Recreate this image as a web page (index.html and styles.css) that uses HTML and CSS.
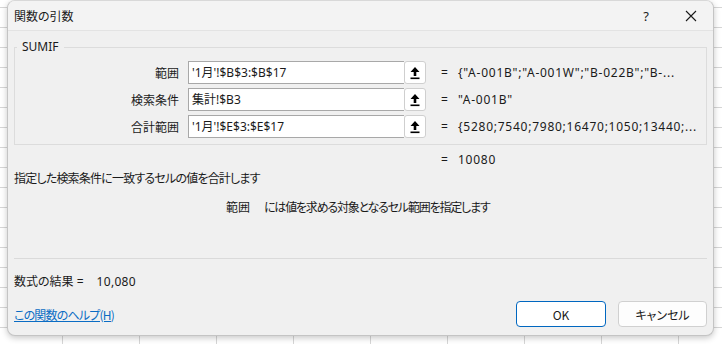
FILE: index.html
```html
<html>

<head>
    <title>関数の引数</title>
    <meta charset="utf-8">
    <link rel="stylesheet" href="styles.css">
</head>

<body>
    <div class="dialog">
        <div class="titleBar">
            <span class="titleText">関数の引数</span>
            <span class="titleHelp">?</span>
            <span class="titleClose">
                <svg width="12" height="12" viewBox="0 0 12 12">
                    <path d="M1 1 L11 11 M11 1 L1 11" stroke="#1a1a1a" stroke-width="1.1" fill="none" />
                </svg>
            </span>
        </div>

        <div class="content">
            <fieldset class="argGroup">
                <legend class="argLegend">SUMIF</legend>

                <div class="argRow">
                    <span class="argLabel">範囲</span>
                    <span class="argField">
                        <span class="argInput">'1月'!$B$3:$B$17</span>
                        <span class="refButton">
                            <svg width="12" height="14" viewBox="0 0 12 14">
                                <path d="M6 1 L10.5 6 L7.3 6 L7.3 10 L4.7 10 L4.7 6 L1.5 6 Z" fill="#000" />
                                <rect x="1.5" y="11.5" width="9" height="1.6" fill="#000" />
                            </svg>
                        </span>
                    </span>
                    <span class="argEq">=</span>
                    <span class="argValue">{"A-001B";"A-001W";"B-022B";"B-...</span>
                </div>

                <div class="argRow">
                    <span class="argLabel">検索条件</span>
                    <span class="argField">
                        <span class="argInput">集計!$B3</span>
                        <span class="refButton">
                            <svg width="12" height="14" viewBox="0 0 12 14">
                                <path d="M6 1 L10.5 6 L7.3 6 L7.3 10 L4.7 10 L4.7 6 L1.5 6 Z" fill="#000" />
                                <rect x="1.5" y="11.5" width="9" height="1.6" fill="#000" />
                            </svg>
                        </span>
                    </span>
                    <span class="argEq">=</span>
                    <span class="argValue">"A-001B"</span>
                </div>

                <div class="argRow">
                    <span class="argLabel">合計範囲</span>
                    <span class="argField">
                        <span class="argInput">'1月'!$E$3:$E$17</span>
                        <span class="refButton">
                            <svg width="12" height="14" viewBox="0 0 12 14">
                                <path d="M6 1 L10.5 6 L7.3 6 L7.3 10 L4.7 10 L4.7 6 L1.5 6 Z" fill="#000" />
                                <rect x="1.5" y="11.5" width="9" height="1.6" fill="#000" />
                            </svg>
                        </span>
                    </span>
                    <span class="argEq">=</span>
                    <span class="argValue">{5280;7540;7980;16470;1050;13440;...</span>
                </div>
            </fieldset>

            <div class="resultRow">
                <span class="argEq">=</span>
                <span class="argValue">10080</span>
            </div>

            <div class="description">指定した検索条件に一致するセルの値を合計します</div>
            <div class="argHelp"><span class="argHelpName">範囲</span>には値を求める対象となるセル範囲を指定します</div>

            <div class="separator"></div>

            <div class="formulaResult">数式の結果 =<span class="formulaValue">10,080</span></div>

            <div class="footer">
                <a class="helpLink" href="#">この関数のヘルプ(H)</a>
                <span class="buttons">
                    <span class="button buttonDefault">OK</span>
                    <span class="button">キャンセル</span>
                </span>
            </div>
        </div>
    </div>
</body>

</html>
```

FILE: styles.css
```css
body {
    margin: 0px;
    width: 722px;
    height: 344px;
    overflow: hidden;
    font-family: "Noto Sans", "Noto Sans CJK JP", sans-serif;
    font-size: 12px;
    font-feature-settings: "palt";
    color: #1a1a1a;
    background-color: #ffffff;
    background-image:
        linear-gradient(to right, #d6d6d6 1px, transparent 1px),
        linear-gradient(to bottom, #d6d6d6 1px, transparent 1px);
    background-size: 77px 20px;
    background-position: 62px 7px;
}

.dialog {
    margin-left: 7px;
    width: 707px;
    height: 336px;
    box-sizing: border-box;
    border: 1px solid #c4c4c4;
    border-top-color: #d8d8d8;
    border-radius: 8px;
    background-color: #f0f0f0;
    box-shadow: 0px 2px 6px rgba(0, 0, 0, 0.22);
    overflow: hidden;
}

.titleBar {
    height: 30px;
    box-sizing: border-box;
    display: flex;
    align-items: center;
    padding-left: 6px;
    background-color: #f3f3f3;
    border-bottom: 1px solid #e3e3e3;
}

.titleText {
    flex: 1;
    font-family: "Noto Sans CJK JP", sans-serif;
    line-height: 16px;
    padding-top: 1px;
}

.titleHelp {
    width: 20px;
    text-align: center;
    font-size: 13px;
    margin-right: 29px;
}

.titleClose {
    display: flex;
    width: 12px;
    margin-right: 16px;
    padding-top: 1px;
}

.content {
    padding: 0px 6px;
}

.argGroup {
    margin: 9px 0px 0px 0px;
    padding: 7px 0px 6px 0px;
    border: 1px solid #dcdcdc;
    display: flex;
    flex-direction: column;
    gap: 4px;
}

.argLegend {
    margin-left: 2px;
    padding: 0px 5px 0px 5px;
    line-height: 14px;
    font-size: 12px;
}

.argRow {
    display: flex;
    align-items: center;
    height: 23px;
}

.argLabel {
    width: 164px;
    margin-right: 9px;
    text-align: right;
    font-family: "Noto Sans CJK JP", sans-serif;
}

.argField {
    display: flex;
    width: 238px;
    height: 23px;
}

.argInput {
    flex: 1;
    box-sizing: border-box;
    height: 23px;
    line-height: 21px;
    padding-left: 3px;
    background-color: #ffffff;
    border: 1px solid #a8a8a8;
    border-right: none;
}

.refButton {
    width: 22px;
    height: 23px;
    box-sizing: border-box;
    display: flex;
    align-items: center;
    justify-content: center;
    background-color: #ffffff;
    border: 1px solid #cfcfcf;
    border-radius: 3px;
}

.argEq {
    margin-left: 15px;
    width: 17px;
}

.argValue {
    white-space: nowrap;
    letter-spacing: 0.75px;
}

.resultRow {
    display: flex;
    height: 16px;
    line-height: 16px;
    margin-top: 7px;
    padding-left: 412px;
}

.description {
    line-height: 16px;
    margin-top: 2px;
    font-family: "Noto Sans CJK JP", sans-serif;
    letter-spacing: -0.8px;
}

.argHelp {
    line-height: 16px;
    margin-top: 13px;
    padding-left: 212px;
    font-family: "Noto Sans CJK JP", sans-serif;
    letter-spacing: -1.2px;
}

.argHelpName {
    margin-right: 14px;
    letter-spacing: 0px;
}

.separator {
    margin-top: 43px;
    height: 1px;
    background-color: #dadada;
}

.formulaResult {
    margin-top: 15px;
    line-height: 16px;
    font-family: "Noto Sans", "Noto Sans CJK JP", sans-serif;
}

.formulaValue {
    margin-left: 13px;
    letter-spacing: 0.3px;
}

.footer {
    margin-top: 11px;
    display: flex;
    align-items: center;
    justify-content: space-between;
    height: 26px;
}

.helpLink {
    color: #0a6cc4;
    font-family: "Noto Sans CJK JP", sans-serif;
    text-decoration: underline;
    letter-spacing: -0.8px;
}

.buttons {
    display: flex;
    gap: 12px;
    margin-right: 0px;
}

.button {
    width: 89px;
    height: 26px;
    box-sizing: border-box;
    display: flex;
    align-items: center;
    justify-content: center;
    background-color: #fdfdfd;
    border: 1px solid #d0d0d0;
    border-radius: 4px;
    font-family: "Noto Sans CJK JP", sans-serif;
}

.buttonDefault {
    width: 90px;
    background-color: #ffffff;
    border: 1px solid #0067c0;
}
```
